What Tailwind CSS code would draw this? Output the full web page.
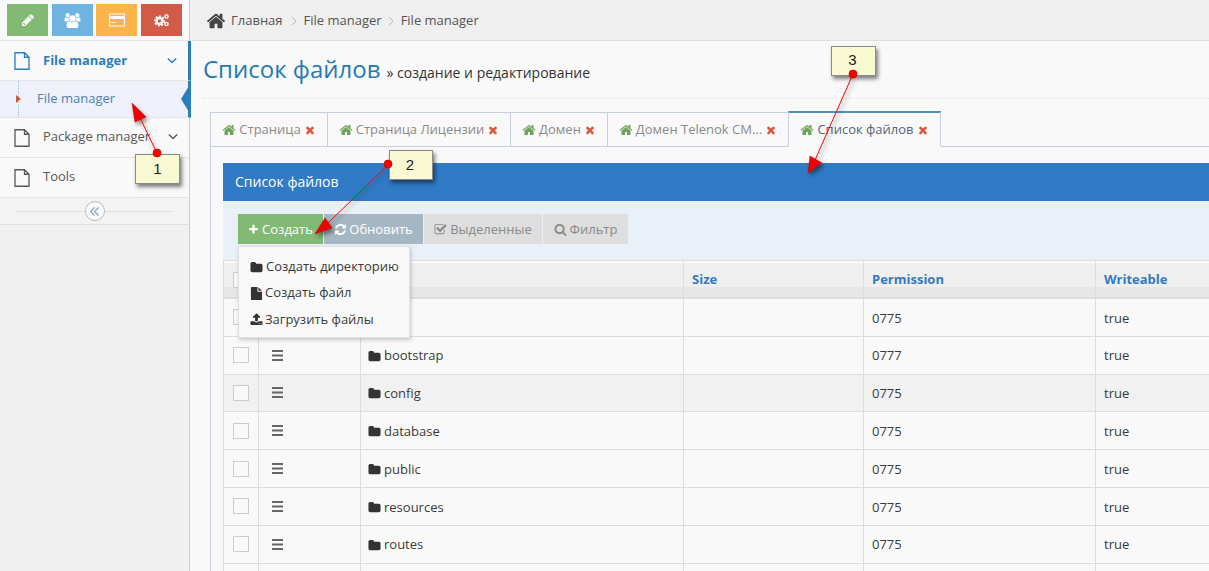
<!DOCTYPE html>
<html lang="en">
<head>
    <meta charset="UTF-8">
    <title>Список файлов</title>
    <script src="https://cdn.jsdelivr.net/npm/@tailwindcss/browser@4"></script>
</head>
<body class="w-[1209px] h-[571px] overflow-hidden relative bg-[#f9f9f9] text-[13px] text-[#393939] font-['Open_Sans',sans-serif]">
    <!-- Icon sprites -->
    <svg class="hidden">
        <symbol id="i-home" viewBox="0 0 1792 1792"><path d="M1472 992v480q0 26-19 45t-45 19h-384v-384h-256v384h-384q-26 0-45-19t-19-45v-480q0-1 .5-3t.5-3l575-474 575 474q1 2 1 6zm223-69l-62 74q-8 9-21 11h-3q-13 0-21-7l-692-577-692 577q-12 8-24 7-13-2-21-11l-62-74q-8-10-7-23.5t11-21.5l719-599q32-26 76-26t76 26l244 204v-195q0-14 9-23t23-9h192q14 0 23 9t9 23v408l219 182q10 8 11 21.5t-7 23.5z"/></symbol>
        <symbol id="i-times" viewBox="0 0 1792 1792"><path d="M1490 1322q0 40-28 68l-136 136q-28 28-68 28t-68-28l-294-294-294 294q-28 28-68 28t-68-28l-136-136q-28-28-28-68t28-68l294-294-294-294q-28-28-28-68t28-68l136-136q28-28 68-28t68 28l294 294 294-294q28-28 68-28t68 28l136 136q28 28 28 68t-28 68l-294 294 294 294q28 28 28 68z"/></symbol>
        <symbol id="i-folder" viewBox="0 0 1792 1792"><path d="M1728 608v704q0 92-66 158t-158 66h-1216q-92 0-158-66t-66-158v-960q0-92 66-158t158-66h320q92 0 158 66t66 158v32h672q92 0 158 66t66 158z"/></symbol>
        <symbol id="i-plus" viewBox="0 0 1792 1792"><path d="M1600 736v192q0 40-28 68t-68 28h-416v416q0 40-28 68t-68 28h-192q-40 0-68-28t-28-68v-416h-416q-40 0-68-28t-28-68v-192q0-40 28-68t68-28h416v-416q0-40 28-68t68-28h192q40 0 68 28t28 68v416h416q40 0 68 28t28 68z"/></symbol>
        <symbol id="i-search" viewBox="0 0 1792 1792"><path d="M1216 832q0-185-131.5-316.5t-316.5-131.5-316.5 131.5-131.5 316.5 131.5 316.5 316.5 131.5 316.5-131.5 131.5-316.5zm512 832q0 52-38 90t-90 38q-54 0-90-38l-343-342q-179 124-399 124-143 0-273.5-55.5t-225-150-150-225-55.5-273.5 55.5-273.5 150-225 225-150 273.5-55.5 273.5 55.5 225 150 150 225 55.5 273.5q0 220-124 399l343 343q37 37 37 90z"/></symbol>
        <symbol id="i-refresh" viewBox="0 0 1792 1792"><path d="M1639 1056q0 5-1 7-64 268-268 434.5t-478 166.5q-146 0-282.5-55t-243.5-157l-129 129q-19 19-45 19t-45-19-19-45v-448q0-26 19-45t45-19h448q26 0 45 19t19 45-19 45l-137 137q71 66 161 102t187 36q134 0 250-65t186-179q11-17 53-117 8-23 30-23h192q13 0 22.5 9.5t9.5 22.5zm25-800v448q0 26-19 45t-45 19h-448q-26 0-45-19t-19-45 19-45l138-138q-148-137-349-137-134 0-250 65t-186 179q-11 17-53 117-8 23-30 23h-199q-13 0-22.5-9.5t-9.5-22.5v-7q65-268 270-434.5t480-166.5q146 0 284 55.5t245 156.5l130-129q19-19 45-19t45 19 19 45z"/></symbol>
        <symbol id="i-check" viewBox="0 0 1792 1792"><path d="M1472 930v318q0 119-84.5 203.5t-203.5 84.5h-832q-119 0-203.5-84.5t-84.5-203.5v-832q0-119 84.5-203.5t203.5-84.5h832q63 0 117 25 15 7 18 23 3 17-9 29l-49 49q-10 10-23 10-3 0-9-2-23-6-45-6h-832q-66 0-113 47t-47 113v832q0 66 47 113t113 47h832q66 0 113-47t47-113v-254q0-13 9-22l64-64q10-10 23-10 6 0 12 3 20 8 20 29zm231-489l-814 814q-24 24-57 24t-57-24l-430-430q-24-24-24-57t24-57l110-110q24-24 57-24t57 24l263 263 647-647q24-24 57-24t57 24l110 110q24 24 24 57t-24 57z"/></symbol>
        <symbol id="i-bars" viewBox="0 0 11 11"><path d="M0 0h11v2h-11zM0 4.5h11v2h-11zM0 9h11v2h-11z"/></symbol>
        <symbol id="i-file" viewBox="0 0 1792 1792"><path d="M1152 512v-472q22 14 36 28l408 408q14 14 28 36h-472zm-128 32q0 40 28 68t68 28h544v1056q0 40-28 68t-68 28h-1344q-40 0-68-28t-28-68v-1600q0-40 28-68t68-28h800v544z"/></symbol>
        <symbol id="i-upload" viewBox="0 0 1792 1792"><path d="M1344 1472q0-26-19-45t-45-19-45 19-19 45 19 45 45 19 45-19 19-45zm256 0q0-26-19-45t-45-19-45 19-19 45 19 45 45 19 45-19 19-45zm128-224v320q0 40-28 68t-68 28h-1472q-40 0-68-28t-28-68v-320q0-40 28-68t68-28h427q21 56 70.5 92t110.5 36h256q61 0 110.5-36t70.5-92h427q40 0 68 28t28 68zm-325-648q-17 40-59 40h-256v448q0 26-19 45t-45 19h-256q-26 0-45-19t-19-45v-448h-256q-42 0-59-40-17-39 14-69l448-448q18-19 45-19t45 19l448 448q31 30 14 69z"/></symbol>
        <symbol id="i-page" viewBox="0 0 16 18"><path d="M1 .75h9.5l4.5 4.5v12h-14z M10.5 .75v4.5h4.5" fill="none" stroke="currentColor" stroke-width="1.3"/></symbol>
        <symbol id="i-chev" viewBox="0 0 12 8"><path d="M1 1.5l5 5 5-5" fill="none" stroke="currentColor" stroke-width="1.6"/></symbol>
        <symbol id="i-sep" viewBox="0 0 6 10"><path d="M1 1l4 4-4 4" fill="none" stroke="#bbb" stroke-width="1"/></symbol>
    </svg>

    <div class="flex h-full">
        <!-- Sidebar -->
        <aside class="w-[190px] shrink-0 h-full bg-[#f0f0f0] border-r border-[#ccc]">
            <div class="h-[41px] flex pl-[7px] pt-[4px] bg-[#f9f9f9] border-b border-[#e5e5e5]">
                <div class="w-[41px] h-[32px] bg-[#82b974] flex items-center justify-center text-white">
                    <svg class="w-[14px] h-[14px] fill-current" viewBox="0 0 1792 1792"><path d="M491 1536l91-91-235-235-91 91v107h128v128h107zm523-928q0-22-22-22-10 0-17 7l-542 542q-7 7-7 17 0 22 22 22 10 0 17-7l542-542q7-7 7-17zm-54-192l416 416-832 832h-416v-416zm683 96q0 53-37 90l-166 166-416-416 166-165q36-38 90-38 53 0 91 38l235 234q37 39 37 91z"/></svg>
                </div>
                <div class="w-[41px] h-[32px] ml-[4px] bg-[#6fb3e0] flex items-center justify-center text-white">
                    <svg class="w-[17px] h-[15px] fill-current" viewBox="0 0 1920 1792"><path d="M593 896q-162 5-265 128h-134q-82 0-138-40.5t-56-118.5q0-353 124-353 6 0 43.5 21t97.5 42.5 119 21.5q67 0 133-23-5 37-5 66 0 139 81 256zm1071 637q0 120-73 189.5t-194 69.5h-874q-121 0-194-69.5t-73-189.5q0-53 3.5-103.5t14-109 26.5-108.5 43-97.5 62-81 85.5-53.5 111.5-20q10 0 43 21.5t73 48 107 48 135 21.5 135-21.5 107-48 73-48 43-21.5q61 0 111.5 20t85.5 53.5 62 81 43 97.5 26.5 108.5 14 109 3.5 103.5zm-1024-1277q0 106-75 181t-181 75-181-75-75-181 75-181 181-75 181 75 75 181zm704 384q0 159-112.5 271.5t-271.5 112.5-271.5-112.5-112.5-271.5 112.5-271.5 271.5-112.5 271.5 112.5 112.5 271.5zm576 225q0 78-56 118.5t-138 40.5h-134q-103-123-265-128 81-117 81-256 0-29-5-66 66 23 133 23 59 0 119-21.5t97.5-42.5 43.5-21q124 0 124 353zm-128-609q0 106-75 181t-181 75-181-75-75-181 75-181 181-75 181 75 75 181z"/></svg>
                </div>
                <div class="w-[41px] h-[32px] ml-[3px] bg-[#ffb44b] flex items-center justify-center text-white">
                    <svg class="w-[16px] h-[14px]" viewBox="0 0 16 14"><rect x="0.5" y="1" width="15" height="12" fill="none" stroke="currentColor"/><rect x="0" y="3" width="16" height="3" fill="currentColor"/><rect x="2" y="9" width="4" height="1" fill="currentColor"/></svg>
                </div>
                <div class="w-[41px] h-[32px] ml-[4px] bg-[#d15b47] flex items-center justify-center text-white">
                    <svg class="w-[16px] h-[14px]" viewBox="0 0 16 14" fill="none" stroke="currentColor"><circle cx="5.5" cy="8" r="3" stroke-width="2.4"/><circle cx="5.5" cy="8" r="4.8" stroke-width="1.6" stroke-dasharray="1.8 1.8"/><circle cx="12.5" cy="3.5" r="1.6" stroke-width="1.4"/><circle cx="12.5" cy="11" r="1.6" stroke-width="1.4"/></svg>
                </div>
            </div>

            <div class="relative">
                <div class="h-[40px] -mr-[2px] flex items-center pl-[14px] pr-[10px] bg-[#f9f9f9] border-b border-[#e5e5e5] text-[#2b7dbc] border-r-[3px] border-r-[#2b7dbc]">
                    <svg class="w-[16px] h-[18px] mr-[13px]"><use href="#i-page"/></svg>
                    <span class="font-bold flex-1">File manager</span>
                    <svg class="w-[10px] h-[7px] mr-[1px]"><use href="#i-chev"/></svg>
                </div>
                <div class="h-[37px] -mr-[2px] relative flex items-center pl-[37px] bg-[#eef1fa] border-b border-[#e5e5e5] text-[#4e7fb0] border-r-[3px] border-r-[#2b7dbc]">
                    File manager
                    <span class="absolute left-[18px] top-0 bottom-0 border-l border-dotted border-[#9dbdd6]"></span>
                    <span class="absolute left-[16px] top-[14px] w-0 h-0 border-y-[4px] border-y-transparent border-l-[5px] border-l-[#c86139]"></span>
                    <span class="absolute -right-px top-[5px] w-0 h-0 border-y-[13px] border-y-transparent border-r-[8px] border-r-[#2b7dbc]"></span>
                </div>
                <div class="h-[40px] flex items-center pl-[14px] pr-[10px] bg-[#f9f9f9] border-b border-[#e5e5e5] text-[#585858]">
                    <svg class="w-[16px] h-[18px] mr-[13px]"><use href="#i-page"/></svg>
                    <span class="flex-1 -mt-[2px]">Package manager</span>
                    <svg class="w-[10px] h-[7px] mr-[1px] -mt-[2px]"><use href="#i-chev"/></svg>
                </div>
                <div class="h-[40px] flex items-center pl-[14px] pr-[10px] bg-[#f9f9f9] border-b border-[#e5e5e5] text-[#585858]">
                    <svg class="w-[16px] h-[18px] mr-[13px]"><use href="#i-page"/></svg>
                    <span class="flex-1 -mt-[2px]">Tools</span>
                </div>
                <div class="h-[27px] relative flex items-center justify-center bg-[#f3f3f3] border-b border-[#e0e0e0]">
                    <span class="absolute left-[15px] right-[15px] top-[13px] border-t border-[#e0e0e0]"></span>
                    <span class="relative w-[20px] h-[20px] rounded-full bg-[#f9f9f9] border border-[#bbb] flex items-center justify-center">
                        <svg class="w-[9px] h-[9px]" viewBox="0 0 9 9" fill="none" stroke="#8ea3b8" stroke-width="1.2"><path d="M4.5 .5l-4 4 4 4M8.5 .5l-4 4 4 4"/></svg>
                    </span>
                </div>
            </div>
        </aside>

        <!-- Main -->
        <main class="flex-1 min-w-0 overflow-hidden">
            <nav class="h-[41px] flex items-center pl-[16px] pt-[1px] bg-[#efefef] border-b border-[#e0e0e0] text-[#555]">
                <svg class="w-[20px] h-[20px] mr-[5px] fill-[#444]"><use href="#i-home"/></svg>
                <span>Главная</span>
                <svg class="w-[6px] h-[10px] ml-[8px] mr-[7px]"><use href="#i-sep"/></svg>
                <span>File manager</span>
                <svg class="w-[6px] h-[10px] ml-[6px] mr-[7px]"><use href="#i-sep"/></svg>
                <span>File manager</span>
            </nav>

            <div class="ml-[13px] h-[58px] pt-[9px] border-b border-dotted border-[#e2e2e2] flex items-baseline gap-[6px]">
                <h1 class="text-[24px] leading-[38px] text-[#2679b5]">Список файлов</h1>
                <span class="text-[14px] text-[#333]">» создание и редактирование</span>
            </div>

            <!-- Tabs + panel -->
            <div class="pl-[20px] pt-[13px] w-[1100px]">
                <div class="flex items-end h-[35px] border-b border-[#c5d0dc] text-[#8a8a8a]">
                    <div class="w-[118px] h-[35px] -mb-px flex items-center justify-center border border-[#c5d0dc] gap-[3px]">
                        <svg class="w-[14px] h-[14px] fill-[#6fa35c]"><use href="#i-home"/></svg>Страница<svg class="w-[12px] h-[12px] fill-[#d9593d]"><use href="#i-times"/></svg>
                    </div>
                    <div class="w-[183px] h-[35px] -mb-px flex items-center justify-center border border-l-0 border-[#c5d0dc] gap-[3px]">
                        <svg class="w-[14px] h-[14px] fill-[#6fa35c]"><use href="#i-home"/></svg>Страница Лицензии<svg class="w-[12px] h-[12px] fill-[#d9593d]"><use href="#i-times"/></svg>
                    </div>
                    <div class="w-[97px] h-[35px] -mb-px flex items-center justify-center border border-l-0 border-[#c5d0dc] gap-[3px]">
                        <svg class="w-[14px] h-[14px] fill-[#6fa35c]"><use href="#i-home"/></svg>Домен<svg class="w-[12px] h-[12px] fill-[#d9593d]"><use href="#i-times"/></svg>
                    </div>
                    <div class="w-[181px] h-[35px] -mb-px flex items-center justify-center border border-l-0 border-[#c5d0dc] gap-[3px]">
                        <svg class="w-[14px] h-[14px] fill-[#6fa35c]"><use href="#i-home"/></svg>Домен Telenok CM...<svg class="w-[12px] h-[12px] fill-[#d9593d]"><use href="#i-times"/></svg>
                    </div>
                    <div class="w-[153px] -ml-px h-[36px] -mb-px flex items-center justify-center border border-[#c5d0dc] border-t-2 border-t-[#4c8fbd] border-b-[#f9f9f9] bg-[#f9f9f9] text-[#576373] gap-[3px]">
                        <svg class="w-[14px] h-[14px] fill-[#6fa35c]"><use href="#i-home"/></svg>Список файлов<svg class="w-[12px] h-[12px] fill-[#d9593d]"><use href="#i-times"/></svg>
                    </div>
                </div>

                <div class="border-l border-[#c5d0dc] pl-[12px] pt-[16px]">
                    <div class="h-[38px] pl-[12px] pb-[2px] flex items-center bg-[#307ac6] text-white text-[14px]">Список файлов</div>
                    <div class="h-[59px] pl-[15px] pt-[13px] bg-[#e9f0f7] flex gap-px text-[13px] text-white">
                        <div class="h-[30px] w-[85px] pt-[1px] flex items-center justify-center gap-[3px] bg-[#82b974]">
                            <svg class="w-[11px] h-[11px] fill-current"><use href="#i-plus"/></svg>Создать
                        </div>
                        <div class="h-[30px] w-[99px] pt-[1px] flex items-center justify-center gap-[2px] bg-[#a5b7c2]">
                            <svg class="w-[13px] h-[13px] fill-current"><use href="#i-refresh"/></svg>Обновить
                        </div>
                        <div class="h-[30px] w-[118px] pt-[1px] flex items-center justify-center gap-[3px] bg-[#dedede] text-[#8a8a8a]">
                            <svg class="w-[13px] h-[13px] fill-current"><use href="#i-check"/></svg>Выделенные
                        </div>
                        <div class="h-[30px] w-[85px] pt-[1px] flex items-center justify-center gap-[3px] bg-[#dedede] text-[#8a8a8a]">
                            <svg class="w-[13px] h-[13px] fill-current"><use href="#i-search"/></svg>Фильтр
                        </div>
                    </div>

                    <!-- Table -->
                    <div id="fileTable" class="w-[1000px] border-l border-t border-[#ddd]">
                        <div class="grid grid-cols-[35px_102px_323px_180px_232px_1fr] h-[38px] border-b-2 border-[#ddd] bg-[linear-gradient(#fafafa_2px,#efefef_2px,#efefef_26px,#e7e7e7_26px)] font-bold text-[#307ac6]">
                            <div class="border-r border-[#ddd] flex items-center pl-[9px] pt-[2px]"><span class="w-[16px] h-[16px] border border-[#ccc] bg-[#f9f9f9]"></span></div>
                            <div class="border-r border-[#ddd]"></div>
                            <div class="border-r border-[#ddd]"></div>
                            <div class="border-r border-[#ddd] flex items-center pl-[8px] pt-[2px]">Size</div>
                            <div class="border-r border-[#ddd] flex items-center pl-[8px] pt-[2px]">Permission</div>
                            <div class="flex items-center pl-[8px] pt-[2px]">Writeable</div>
                        </div>
                    </div>
                </div>
            </div>
        </main>
    </div>

    <!-- Dropdown over the table -->
    <div class="absolute left-[238px] top-[246px] w-[172px] h-[92px] pt-[7px] bg-[#f9f9f9] border border-[#e0e0e0] shadow-[1px_2px_4px_rgba(0,0,0,0.2)] z-10">
        <div class="h-[26px] flex items-center pl-[11px] gap-[3px]"><svg class="w-[13px] h-[13px] fill-[#333]"><use href="#i-folder"/></svg>Создать директорию</div>
        <div class="h-[26px] flex items-center pl-[11px] gap-[2px]"><svg class="w-[13px] h-[13px] fill-[#333]"><use href="#i-file"/></svg>Создать файл</div>
        <div class="h-[27px] flex items-center pl-[11px] gap-[2px]"><svg class="w-[13px] h-[13px] fill-[#333]"><use href="#i-upload"/></svg>Загрузить файлы</div>
    </div>

    <!-- Annotations -->
    <svg class="absolute inset-0 z-20 pointer-events-none" width="1209" height="571">
        <defs><filter id="sh" x="-50%" y="-50%" width="200%" height="200%"><feDropShadow dx="2" dy="3" stdDeviation="2" flood-color="#000" flood-opacity="0.45"/></filter></defs>
        <g filter="url(#sh)">
            <path d="M157 153L140 118" stroke="#f00" fill="none"/><path d="M132 103L135 122L146 117z" fill="#e00" stroke="#b00" stroke-width="0.5"/>
            <path d="M389 164L328 223" stroke="#f00" fill="none"/><path d="M315 234L325 218L332 228z" fill="#e00" stroke="#b00" stroke-width="0.5"/>
            <path d="M853 74L815 160" stroke="#f00" fill="none"/><path d="M808 173L810 156L822 163z" fill="#e00" stroke="#b00" stroke-width="0.5"/>
        </g>
    </svg>
    <div class="absolute z-20 left-[135px] top-[154px] w-[45px] h-[30px] bg-[#f9f9d3] border border-[#8a8a8a] shadow-[2px_3px_4px_rgba(0,0,0,0.5)] flex items-center justify-center text-[15px] text-[#222] font-['Liberation_Sans',sans-serif]">1</div>
    <div class="absolute z-20 left-[389px] top-[150px] w-[44px] h-[30px] bg-[#f9f9d3] border border-[#8a8a8a] shadow-[2px_3px_4px_rgba(0,0,0,0.5)] flex items-center justify-center pt-[1px] pr-[2px] text-[15px] text-[#222] font-['Liberation_Sans',sans-serif]">2</div>
    <div class="absolute z-20 left-[831px] top-[46px] w-[45px] h-[30px] bg-[#f9f9d3] border border-[#8a8a8a] shadow-[2px_3px_4px_rgba(0,0,0,0.5)] flex items-center justify-center pb-[2px] pr-[2px] text-[15px] text-[#222] font-['Liberation_Sans',sans-serif]">3</div>
    <svg class="absolute inset-0 z-30 pointer-events-none" width="1209" height="571">
        <circle cx="157" cy="153" r="4" fill="#f00" stroke="#b00" stroke-width="0.7"/>
        <circle cx="388" cy="164" r="4" fill="#f00" stroke="#b00" stroke-width="0.7"/>
        <circle cx="853" cy="74" r="4" fill="#f00" stroke="#b00" stroke-width="0.7"/>
    </svg>

    <script>
        const files = [
            ['', '0775', 'true'],
            ['bootstrap', '0777', 'true'],
            ['config', '0775', 'true'],
            ['database', '0775', 'true'],
            ['public', '0775', 'true'],
            ['resources', '0775', 'true'],
            ['routes', '0775', 'true'],
            ['', '', '']
        ];
        const table = document.getElementById('fileTable');
        files.forEach((file, i) => {
            const row = document.createElement('div');
            row.className = 'grid grid-cols-[35px_102px_323px_180px_232px_1fr] h-[37.8px] border-b border-[#ddd] ' + (i === 2 ? 'bg-[#f1f1f1]' : 'bg-[#f9f9f9]');
            row.innerHTML = `
                <div class="border-r border-[#ddd] flex items-center pl-[9px]"><span class="w-[16px] h-[16px] border border-[#ccc] bg-[#f9f9f9]"></span></div>
                <div class="border-r border-[#ddd] flex items-center pl-[13px]"><svg class="w-[11px] h-[11px] fill-[#666]"><use href="#i-bars"/></svg></div>
                <div class="border-r border-[#ddd] flex items-center pl-[7px] pt-[2px] gap-[3px]">${file[0] ? '<svg class="w-[13px] h-[13px] fill-[#333]"><use href="#i-folder"/></svg>' + file[0] : ''}</div>
                <div class="border-r border-[#ddd]"></div>
                <div class="border-r border-[#ddd] flex items-center pl-[8px] pt-[2px]">${file[1]}</div>
                <div class="flex items-center pl-[8px] pt-[2px]">${file[2]}</div>`;
            table.appendChild(row);
        });
    </script>
</body>
</html>
